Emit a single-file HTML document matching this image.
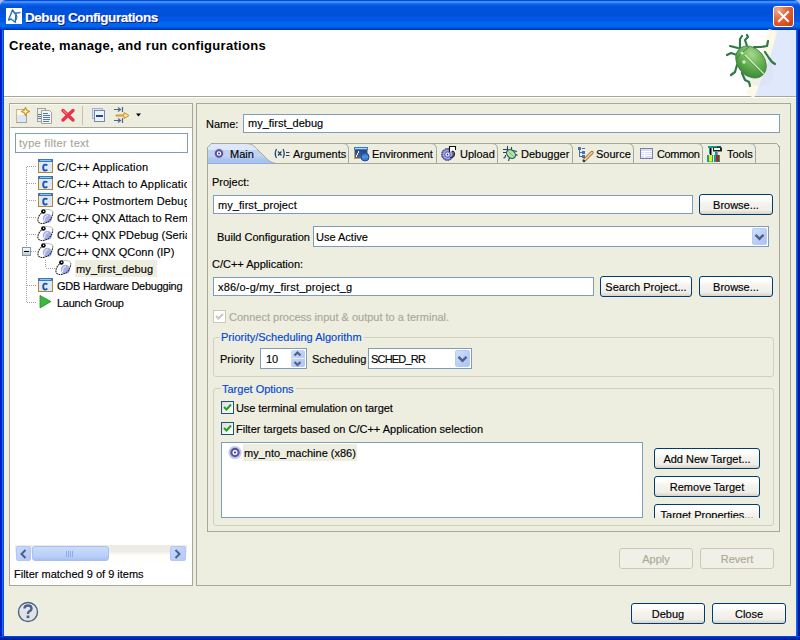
<!DOCTYPE html>
<html><head><meta charset="utf-8">
<style>
*{margin:0;padding:0;box-sizing:border-box}
html,body{width:800px;height:640px;overflow:hidden;background:#a9bde9}
body{position:relative;font-family:"Liberation Sans",sans-serif;font-size:11px;color:#000;-webkit-text-stroke:0.15px currentColor}
.a{position:absolute}
svg.a{overflow:visible}
.t{position:absolute;white-space:nowrap;line-height:13px}
#title{left:0;top:0;width:800px;height:30px;border-radius:6px 6px 0 0;
background:linear-gradient(to bottom,#0a4adb 0,#0a4adb 1px,#3d8ef8 1px,#3d8ef8 3px,#1a6ef2 3px,#1a6ef2 4px,#0b5feb 4px,#0558e6 6px,#0052db 6px,#0052db 17px,#0058e4 17px,#0058e4 22px,#0066ed 22px,#0066ed 27px,#005de9 27px,#0048d4 28px,#0048d4 29px,#0036b8 29px)}
#lb{left:0;top:30px;width:4px;height:610px;background:linear-gradient(to right,#0018c0 0,#0a22c8 2px,#166ef0 2px,#166ef0 3px,#0050e0 3px)}
#rb{left:796px;top:30px;width:4px;height:610px;background:linear-gradient(to right,#0f66f8 0,#0f66f8 1px,#0048d8 1px,#0048d8 2px,#001a98 2px)}
#bb{left:0;top:636px;width:800px;height:4px;background:linear-gradient(to bottom,#0048e0 0,#0048e0 1px,#0030b8 1px,#001a98 4px)}
.panel{border:1px solid #a8a79a}
.tb{position:absolute;background:#fff;border:1px solid #7f9db9}
.btn{position:absolute;border:1px solid #003c74;border-radius:3px;background:linear-gradient(to bottom,#fff 0,#fefefd 20%,#f4f3ee 45%,#efeee8 80%,#d8d2c6 100%);text-align:center;line-height:19px;padding-top:1px;white-space:nowrap}
.btn.dis{border-color:#cac8bb;color:#aca899;background:#f0f0e6}
.grp{position:absolute;border:1px solid #d0d0bf;border-radius:3px}
.gt{position:absolute;color:#0046d5;background:#eeeee0;padding:0 2px 0 1px;white-space:nowrap;line-height:13px}
.cb{position:absolute;width:13px;height:13px;border:1px solid #1c5180;background:linear-gradient(135deg,#dcdcd7 0,#f6f6f3 70%,#fff 100%)}
</style></head><body>
<div id="title" class="a"></div>
<div id="lb" class="a"></div>
<div id="rb" class="a"></div>
<div id="bb" class="a"></div>
<div class="a" style="left:4px;top:30px;width:792px;height:66px;background:#fff"></div>
<div class="a" style="left:4px;top:96px;width:792px;height:1px;background:#a8a79a"></div>
<div class="a" style="left:4px;top:97px;width:792px;height:1px;background:#fff"></div>
<div class="a" style="left:4px;top:98px;width:792px;height:538px;background:#eeeee0"></div>

<!-- title text -->
<div class="t" style="left:26px;top:12px;font-weight:bold;font-size:13.5px;letter-spacing:-0.45px;color:#0a1e8a">Debug Configurations</div>
<div class="t" style="left:25px;top:11px;font-weight:bold;font-size:13.5px;letter-spacing:-0.45px;color:#fff">Debug Configurations</div>
<!-- title icon -->
<svg class="a" style="left:6px;top:8px" width="16" height="16" viewBox="0 0 16 16">
<rect width="16" height="16" fill="#fff"/>
<g fill="none" stroke-linecap="round" stroke-linejoin="round">
<path d="M6.5 2 L9 5.5 L10 5 L9.3 14.3 L5 11 L2.5 12 L6.5 2" stroke="#2f6aa8" stroke-width="1.4"/>
<path d="M8.5 5.5 L14 4.5" stroke="#3c80c0" stroke-width="1.3"/>
<path d="M10.5 7 Q12 9 10 12" stroke="#2a5a98" stroke-width="1"/>
<path d="M5 8 L4 10.5 M6 11 L8 12" stroke="#8ad4f4" stroke-width="1"/>
</g>
</svg>
<!-- close btn -->
<div class="a" style="left:773px;top:6px;width:21px;height:21px;border:1px solid #fff;border-radius:3px;background:radial-gradient(circle at 20% 15%,#f4a88c 0,#e66a40 40%,#d84a1c 75%,#c03a10 100%)"></div>
<svg class="a" style="left:773px;top:6px" width="21" height="21"><path d="M6 6 L15 15 M15 6 L6 15" stroke="#fff" stroke-width="2" stroke-linecap="square"/></svg>

<!-- header text -->
<div class="t" style="left:9px;top:39px;font-weight:bold;font-size:13px;letter-spacing:0.3px;-webkit-text-stroke:0">Create, manage, and run configurations</div>
<!-- header art (bug) -->
<svg class="a" style="left:700px;top:30px" width="96" height="66" viewBox="0 0 96 66">
<defs>
<radialGradient id="bugb" cx="0.35" cy="0.3" r="0.75"><stop offset="0" stop-color="#a8d890"/><stop offset="0.45" stop-color="#6cb456"/><stop offset="1" stop-color="#3a8a36"/></radialGradient>
<radialGradient id="glow" cx="0.5" cy="0.5" r="0.5"><stop offset="0" stop-color="#fffbe8" stop-opacity="1"/><stop offset="1" stop-color="#fffbe8" stop-opacity="0"/></radialGradient>
</defs>
<path d="M75 0 H96 V66 H55 C62 45 69 25 75 0 Z" fill="#e0e8fc"/>
<path d="M73 0 C67 25 59 45 50 66" fill="none" stroke="#fdf8e6" stroke-width="9" opacity="0.9"/>
<ellipse cx="56" cy="38" rx="20" ry="16" transform="rotate(50 56 38)" fill="#d8dcec" opacity="0.35"/>
<g stroke="#2e7a46" stroke-width="2.2" fill="none" stroke-linecap="round" stroke-linejoin="round">
<path d="M40 18 L40 9 L42 6"/>
<path d="M38 18 L30 16"/>
<path d="M47 16 L45 10 L48 7 L47 5"/>
<path d="M54 17 L61 17 L67 16 L68 11"/>
<path d="M65 22 L69 28 L72 32 L75 34"/>
<path d="M37 25 L31 23 L27 25"/>
<path d="M37 35 L35 42 L31 45"/>
<path d="M42 43 L45 50 L49 52 L50 56"/>
</g>
<ellipse cx="51" cy="32" rx="17.5" ry="13.5" transform="rotate(50 51 32)" fill="url(#bugb)" stroke="#3a8040" stroke-width="0.8"/>
<path d="M49 17 C44 20 40 25 36 29" fill="none" stroke="#3e8a3a" stroke-width="1"/>
<path d="M45 25 L64 44" stroke="#d8f0c8" stroke-width="1.2"/>
<path d="M45 25 L64 44" stroke="#3a7a30" stroke-width="0.6" transform="translate(-0.8 0.8)"/>
<circle cx="42" cy="23" r="1.6" fill="#e8f8e0" opacity="0.8"/>
<circle cx="44" cy="32" r="1.8" fill="#e8f8e0" opacity="0.8"/>
</svg>

<!-- ===== left panel ===== -->
<div class="a panel" style="left:9px;top:103px;width:184px;height:483px;background:#fff"></div>
<div class="a" style="left:10px;top:104px;width:182px;height:24px;background:#eeeee0;border-bottom:1px solid #a8a79a;border-left:1px solid #f8f8f0;border-top:1px solid #f8f8f0"></div>
<svg class="a" style="left:0;top:0" width="200" height="130">
<!-- new -->
<rect x="16.5" y="109.5" width="10" height="13" fill="#dde6fa" stroke="#a4a494"/>
<rect x="17" y="110" width="9" height="5" fill="#fff8e4"/>
<path d="M16.5 122.5 V109.5 H22" fill="none" stroke="#c8b888"/>
<path d="M25.5 107.5 L26.8 110.2 L29.5 111.5 L26.8 112.8 L25.5 115.5 L24.2 112.8 L21.5 111.5 L24.2 110.2 Z" fill="#fff4c0" stroke="#c89020" stroke-width="1.1" stroke-linejoin="round"/>
<!-- duplicate -->
<rect x="37.5" y="108.5" width="8" height="13" fill="#eee" stroke="#a4a494"/>
<path d="M41.5 110.5 H49.5 L51.5 112.5 V123.5 H41.5 Z" fill="#f6f6f6" stroke="#a4a494"/>
<g stroke="#5078b8"><line x1="43" y1="113.5" x2="48" y2="113.5"/><line x1="43" y1="115.5" x2="50" y2="115.5"/><line x1="43" y1="117.5" x2="50" y2="117.5"/><line x1="43" y1="119.5" x2="50" y2="119.5"/><line x1="43" y1="121.5" x2="49" y2="121.5"/><line x1="38" y1="114.5" x2="41" y2="114.5"/><line x1="38" y1="116.5" x2="41" y2="116.5"/><line x1="38" y1="118.5" x2="41" y2="118.5"/></g>
<!-- delete -->
<path d="M63 110.5 L73 120 M73 110.5 L63 120" stroke="#e8344a" stroke-width="3.4" stroke-linecap="round"/>
<path d="M63 110.5 L67 114" stroke="#f8a0a8" stroke-width="1"/>
<!-- sep -->
<line x1="82.5" y1="106" x2="82.5" y2="125" stroke="#c8c0a8"/>
<!-- collapse -->
<rect x="92.5" y="108.5" width="10" height="10" fill="#d8e4f4" stroke="#a0b4d0"/>
<rect x="94.5" y="110.5" width="10" height="11" fill="#eef2fa" stroke="#7a86a8"/>
<line x1="96" y1="116" x2="103" y2="116" stroke="#1c4aa0" stroke-width="2"/>
<!-- filter -->
<g stroke="#4d6890" stroke-width="1.2" fill="none"><path d="M114 109.5 H120 M118 107.5 L120.5 109.5 L118 111.5 M122.5 107 V112"/><path d="M114 120.5 H120 M118 118.5 L120.5 120.5 L118 122.5 M122.5 118 V123"/></g>
<path d="M116 115 H124 V112.5 L129 115.5 L124 118.5 V116 H116 Z" fill="#f8e8a0" stroke="#c89020"/>
<path d="M136 113.5 H141 L138.5 116.5 Z" fill="#000"/>
</svg>
<div class="tb" style="left:15px;top:133px;width:173px;height:20px"></div>
<div class="t" style="left:19px;top:137px;color:#a8a79a;letter-spacing:0.3px">type filter text</div>

<!-- tree -->
<div class="a" style="left:15px;top:156px;width:172px;height:388px;overflow:hidden">
<svg class="a" style="left:-15px;top:-156px" width="200" height="320">
<g stroke="#a0a0a0" stroke-dasharray="1 1" shape-rendering="crispEdges">
<line x1="26.5" y1="167" x2="26.5" y2="302"/>
<line x1="27" y1="166.5" x2="37" y2="166.5"/>
<line x1="27" y1="183.5" x2="37" y2="183.5"/>
<line x1="27" y1="200.5" x2="37" y2="200.5"/>
<line x1="27" y1="217.5" x2="37" y2="217.5"/>
<line x1="27" y1="234.5" x2="37" y2="234.5"/>
<line x1="31" y1="251.5" x2="37" y2="251.5"/>
<line x1="27" y1="285.5" x2="37" y2="285.5"/>
<line x1="27" y1="302.5" x2="37" y2="302.5"/>
<line x1="45.5" y1="260" x2="45.5" y2="268"/>
<line x1="46" y1="268.5" x2="55" y2="268.5"/>
</g>
<defs><linearGradient id="mbg" x1="0" y1="0" x2="0" y2="1"><stop offset="0" stop-color="#fff"/><stop offset="1" stop-color="#c8c4b4"/></linearGradient></defs><rect x="22.5" y="247.5" width="8" height="8" fill="url(#mbg)" stroke="#7a98af"/>
<line x1="24" y1="251.5" x2="29" y2="251.5" stroke="#000"/>
<g id="cic">
<rect x="38.5" y="159.5" width="14" height="13" fill="#dfe7fc" stroke="#b08a30"/>
<rect x="38" y="159" width="15" height="3" fill="#3a78b8"/>
<line x1="40" y1="160.5" x2="51" y2="160.5" stroke="#8ac8f0"/>
<path d="M47.2 165.6 Q46.6 164.6 45.2 164.6 Q43.2 164.6 43.2 167.6 Q43.2 170.6 45.2 170.6 Q46.6 170.6 47.2 169.6" fill="none" stroke="#1e56a0" stroke-width="1.9"/>
</g>
<use href="#cic" y="17"/>
<use href="#cic" y="34"/>
<use href="#cic" y="119"/>
<g id="qic">
<path d="M44 209.8 C48 209.2 52.5 209.5 52.8 212.5" fill="none" stroke="#b8c8cc" stroke-width="1.1"/>
<circle cx="47.4" cy="218.4" r="4.6" fill="#a6aee8"/>
<path d="M44.6 221 Q44.2 216.5 47.8 215.3" stroke="#e8ecfc" stroke-width="1.1" fill="none"/>
<path d="M43.4 211.5 C39.5 214 37 218.5 38.2 221.5 C39.5 224.2 43.5 223.8 47 222.3 C50 220.8 52.5 217.5 52.8 212.5" fill="none" stroke="#2c2c30" stroke-width="1.1" stroke-dasharray="1.8 0.7"/>
<circle cx="43.4" cy="211.5" r="2.3" fill="#000"/>
<circle cx="43.6" cy="211.3" r="0.75" fill="#fff"/>
</g>
<use href="#qic" y="17"/>
<use href="#qic" y="34"/>
<use href="#qic" x="18" y="51"/>
<path d="M40 295.5 L51 301.5 L40 308 Z" fill="#3cb83c" stroke="#2a8a2a" stroke-width="0.8"/>
</svg>
<div class="a" style="left:60px;top:104px;width:82px;height:17px;background:#eeeee0"></div>
<div class="t" style="left:42px;top:5px;letter-spacing:0.19px">C/C++ Application</div>
<div class="t" style="left:42px;top:22px;letter-spacing:0.2px">C/C++ Attach to Application</div>
<div class="t" style="left:42px;top:39px;letter-spacing:0.15px">C/C++ Postmortem Debugger</div>
<div class="t" style="left:42px;top:56px">C/C++ QNX Attach to Remote</div>
<div class="t" style="left:42px;top:73px">C/C++ QNX PDebug (Serial)</div>
<div class="t" style="left:42px;top:90px">C/C++ QNX QConn (IP)</div>
<div class="t" style="left:61px;top:107px;letter-spacing:0.15px">my_first_debug</div>
<div class="t" style="left:42px;top:124px;letter-spacing:-0.25px">GDB Hardware Debugging</div>
<div class="t" style="left:42px;top:141px;letter-spacing:-0.25px">Launch Group</div>
</div>

<!-- scrollbar -->
<div class="a" style="left:15px;top:545px;width:172px;height:17px;background:linear-gradient(to bottom,#eeede5 0,#eeede5 40%,#fefefb 60%,#fefefb 100%)"></div>
<div class="a" style="left:16px;top:546px;width:15px;height:15px;border:1px solid #b4c8f6;border-radius:2px;background:linear-gradient(135deg,#c8daff,#b4c8f4)"></div>
<div class="a" style="left:32px;top:546px;width:77px;height:15px;border:1px solid #a8bef0;border-radius:3px;background:linear-gradient(to bottom,#cadcfc,#b8d0f8 70%,#a8c0f0)"></div>
<div class="a" style="left:170px;top:546px;width:16px;height:15px;border:1px solid #b4c8f6;border-radius:2px;background:linear-gradient(135deg,#c8daff,#b4c8f4)"></div>
<svg class="a" style="left:0;top:540px" width="200" height="24">
<path d="M25.5 10 L21.5 14 L25.5 18" fill="none" stroke="#4d6185" stroke-width="2"/>
<path d="M175.5 10 L179.5 14 L175.5 18" fill="none" stroke="#4d6185" stroke-width="2"/>
<g stroke="#8aacf0"><line x1="66.5" y1="11" x2="66.5" y2="17"/><line x1="68.5" y1="11" x2="68.5" y2="17"/><line x1="70.5" y1="11" x2="70.5" y2="17"/><line x1="72.5" y1="11" x2="72.5" y2="17"/></g>
</svg>
<div class="t" style="left:14px;top:568px">Filter matched 9 of 9 items</div>

<!-- ===== right panel ===== -->
<div class="a panel" style="left:196px;top:103px;width:595px;height:483px;border-left-color:#a8a79a"></div>
<div class="t" style="left:206px;top:118px">Name:</div>
<div class="tb" style="left:243px;top:114px;width:537px;height:19px"></div>
<div class="t" style="left:248px;top:117px">my_first_debug</div>

<!-- tab folder -->
<svg class="a" style="left:0;top:0" width="800" height="640" shape-rendering="crispEdges">
<defs><linearGradient id="selg" x1="0" y1="0" x2="0" y2="1">
<stop offset="0" stop-color="#dfe8fb"/><stop offset="0.3" stop-color="#dfe8fb"/><stop offset="0.32" stop-color="#bdd2f5"/><stop offset="0.6" stop-color="#c3d3f1"/><stop offset="0.75" stop-color="#aac6ef"/><stop offset="1" stop-color="#a6c2ee"/></linearGradient></defs>
<path d="M207.5 531.5 V147.5 L211.5 143.5 H774.5 Q779.5 143.5 779.5 149.5 V531.5 Z" fill="none" stroke="#a8a79a"/>
<path d="M208 164 V147.5 L211.5 144 H246 C252 144 254 146 258 150 L266 158 C270 162 273 163 277 163 V164 Z" fill="url(#selg)" shape-rendering="auto"/>
<path d="M208 163 H277 V164 H208 Z" fill="#8daee8"/>
<path d="M246 143.5 C252 143.5 254 146 258 150 L266 158 C270 162 273 163.5 277 163.5" fill="none" stroke="#a8a79a" shape-rendering="auto"/>
<line x1="277" y1="163.5" x2="779" y2="163.5" stroke="#a8a79a"/>
<g fill="none" stroke="#a8a79a" shape-rendering="auto">
<path d="M343 143.5 Q348.5 143.5 348.5 149.5 V163"/>
<path d="M431 143.5 Q436.5 143.5 436.5 149.5 V163"/>
<path d="M492 143.5 Q497.5 143.5 497.5 149.5 V163"/>
<path d="M567 143.5 Q572.5 143.5 572.5 149.5 V163"/>
<path d="M628 143.5 Q633.5 143.5 633.5 149.5 V163"/>
<path d="M697 143.5 Q702.5 143.5 702.5 149.5 V163"/>
<path d="M750 143.5 Q755.5 143.5 755.5 149.5 V163"/>
</g>
</svg>
<!-- tab icons -->
<svg class="a" style="left:0;top:0" width="800" height="170">
<!-- main -->
<circle cx="219" cy="153.5" r="5.4" fill="#b4bce8" opacity="0.6"/>
<circle cx="219" cy="153.5" r="3.2" fill="#fff" stroke="#5a4f9a" stroke-width="1.9"/>
<circle cx="219" cy="153.5" r="1" fill="#2a3a7a"/>
<!-- args -->
<g stroke="#1f3f6f" stroke-width="1.2" fill="none">
<path d="M276.5 149 Q274 153.5 276.5 158"/>
<path d="M283 149 Q285.5 153.5 283 158"/>
<path d="M278 151.5 L281.5 155.5 M281.5 151.5 L278 155.5"/>
<path d="M286 152.5 H289.5 M286 155.5 H289.5"/>
</g>
<!-- environment -->
<defs><linearGradient id="envg" x1="0" y1="0" x2="0" y2="1"><stop offset="0" stop-color="#143a88"/><stop offset="1" stop-color="#4a6aa8"/></linearGradient></defs>
<rect x="354.5" y="147.5" width="13" height="11" fill="url(#envg)" stroke="#c8a050"/>
<rect x="354" y="147" width="14" height="3" fill="#3a7ac8"/>
<line x1="355" y1="148.5" x2="367" y2="148.5" stroke="#a8d8f8"/>
<g fill="#fff"><rect x="358" y="151" width="1" height="2"/><rect x="357" y="153" width="1" height="2"/><rect x="356" y="155" width="1" height="2"/></g>
<circle cx="365" cy="157" r="4" fill="#3a7ed0" stroke="#1a4aa0" stroke-width="1"/>
<line x1="362" y1="157" x2="368" y2="157" stroke="#6aa8e8" stroke-width="1"/>
<!-- upload -->
<circle cx="447.5" cy="154.5" r="6" fill="#6e6ec4" stroke="#222" stroke-width="0.8" stroke-dasharray="1.5 1"/>
<circle cx="447.5" cy="154.5" r="4" fill="none" stroke="#b8c0f4" stroke-width="1"/>
<circle cx="447.5" cy="154.5" r="2" fill="#fff"/>
<circle cx="447.5" cy="154.5" r="0.9" fill="#23407a"/>
<path d="M449.5 152 V146.5 H455.5 V150" fill="#fff" stroke="#111" stroke-width="1.1"/>
<path d="M452 151 Q455.5 152 454 156 Q453 157.5 450 157.5" fill="none" stroke="#111" stroke-width="1.1"/>
<!-- debugger -->
<g stroke="#1a4a4a" stroke-width="1.1" fill="none">
<path d="M503 149.5 H508 M507.5 146 V150 M511.5 147 V150.5 M513 150.5 L517 151.5"/>
<path d="M503 152.5 H506 M505.5 155 L505 157.5 L503.5 158 M516 154.5 L517.5 155.5"/>
<path d="M509.5 157.5 L508.5 161"/>
</g>
<ellipse cx="511" cy="154" rx="5" ry="3.8" transform="rotate(45 511 154)" fill="#b8e4a0" stroke="#1f5f7f" stroke-width="1.2"/>
<line x1="508.5" y1="151.5" x2="513.5" y2="156.5" stroke="#68b048" stroke-width="0.8"/>
<!-- source -->
<g fill="#4a6fb0"><rect x="578" y="147" width="3" height="3"/><rect x="582" y="148" width="3" height="1"/><rect x="582" y="151" width="3" height="3"/><rect x="582" y="155" width="3" height="3"/><rect x="579" y="150" width="1" height="7"/><rect x="580" y="152" width="2" height="1"/><rect x="580" y="156" width="2" height="1"/></g>
<path d="M584 160.5 L592 152.5" stroke="#8a5a20" stroke-width="3.2" stroke-linecap="round"/>
<path d="M584 160.5 L592 152.5" stroke="#f4c888" stroke-width="1.8" stroke-linecap="round"/>
<rect x="583" y="160" width="2" height="2" fill="#1a3a7a"/>
<!-- common -->
<rect x="640.5" y="148.5" width="12" height="10" fill="#d8ddf4" stroke="#7a80b0"/>
<g stroke="#fff"><line x1="641" y1="151.5" x2="652" y2="151.5"/><line x1="641" y1="153.5" x2="652" y2="153.5"/><line x1="641" y1="155.5" x2="652" y2="155.5"/><line x1="644.5" y1="151" x2="644.5" y2="158"/></g>
<!-- tools -->
<rect x="708" y="146" width="9" height="2" fill="#10a090"/>
<rect x="717" y="146" width="4" height="2" fill="#106050"/>
<rect x="713" y="147.5" width="9" height="4" fill="#222"/>
<rect x="714" y="148" width="6" height="2" fill="#f4f4f4"/>
<rect x="710" y="148" width="1.5" height="7" fill="#000"/>
<rect x="709" y="148" width="1" height="6" fill="#10a090"/>
<rect x="715" y="151.5" width="2" height="4" fill="#10a090"/>
<rect x="717" y="151.5" width="1" height="4" fill="#a080c0"/>
<rect x="707" y="155" width="6" height="7" fill="#10a090"/>
<rect x="709" y="155" width="3" height="6.5" fill="#f0f000"/>
<rect x="714" y="155" width="6" height="7" fill="#10a090"/>
<rect x="716" y="155" width="3" height="6.5" fill="#c02010"/>
</svg>
<div class="t" style="left:230px;top:148px">Main</div>
<div class="t" style="left:293px;top:148px">Arguments</div>
<div class="t" style="left:372px;top:148px;letter-spacing:-0.1px">Environment</div>
<div class="t" style="left:460px;top:148px">Upload</div>
<div class="t" style="left:521px;top:148px">Debugger</div>
<div class="t" style="left:596px;top:148px">Source</div>
<div class="t" style="left:657px;top:148px;letter-spacing:-0.35px">Common</div>
<div class="t" style="left:727px;top:148px">Tools</div>

<div class="t" style="left:212px;top:176px">Project:</div>
<div class="tb" style="left:213px;top:195px;width:480px;height:19px"></div>
<div class="t" style="left:218px;top:199px;letter-spacing:0.07px">my_first_project</div>
<div class="btn" style="left:699px;top:194px;width:74px;height:21px">Browse...</div>

<div class="t" style="left:217px;top:231px">Build Configuration</div>
<div class="tb" style="left:313px;top:226px;width:456px;height:21px"></div>
<div class="t" style="left:316px;top:231px">Use Active</div>
<div class="a" style="left:752px;top:228px;width:15px;height:17px;border-radius:2px;border:1px solid #b8cbf4;background:linear-gradient(135deg,#d0e0fc 0,#b8ccf6 60%,#acc4f4 100%)"></div>
<svg class="a" style="left:745px;top:222px" width="30" height="28"><path d="M10.5 12.8 L14.5 16.8 L18.5 12.8" fill="none" stroke="#4d6185" stroke-width="2.4"/></svg>

<div class="t" style="left:212px;top:258px">C/C++ Application:</div>
<div class="tb" style="left:213px;top:277px;width:381px;height:19px"></div>
<div class="t" style="left:218px;top:281px;letter-spacing:0.18px">x86/o-g/my_first_project_g</div>
<div class="btn" style="left:600px;top:276px;width:92px;height:21px">Search Project...</div>
<div class="btn" style="left:699px;top:276px;width:74px;height:21px">Browse...</div>

<div class="a" style="left:213px;top:310px;width:13px;height:13px;border:1px solid #cac8bb;background:#fff"></div>
<svg class="a" style="left:213px;top:310px" width="13" height="13"><path d="M3 6 L5.5 8.5 L10 4" fill="none" stroke="#c8c8b8" stroke-width="2"/></svg>
<div class="t" style="left:229px;top:311px;color:#a8a79a">Connect process input &amp; output to a terminal.</div>

<div class="grp" style="left:213px;top:337px;width:561px;height:40px"></div>
<div class="gt" style="left:220px;top:331px">Priority/Scheduling Algorithm</div>
<div class="t" style="left:220px;top:353px">Priority</div>
<div class="tb" style="left:260px;top:348px;width:47px;height:21px"></div>
<div class="t" style="left:266px;top:353px">10</div>
<div class="a" style="left:291px;top:350px;width:14px;height:17px;border-radius:2px;background:linear-gradient(135deg,#d0e0fc 0,#b8ccf6 60%,#aec4f4 100%)"></div><div class="a" style="left:290px;top:358px;width:16px;height:1px;background:#eeeedc"></div>

<svg class="a" style="left:284px;top:344px" width="28" height="28"><path d="M10.5 11.5 L13.5 8.5 L16.5 11.5 M10.5 18 L13.5 21 L16.5 18" fill="none" stroke="#4d6185" stroke-width="2.2"/></svg>
<div class="t" style="left:312px;top:353px">Scheduling</div>
<div class="tb" style="left:368px;top:348px;width:104px;height:21px"></div>
<div class="t" style="left:371px;top:353px;letter-spacing:-0.8px">SCHED_RR</div>
<div class="a" style="left:455px;top:350px;width:15px;height:17px;border-radius:2px;border:1px solid #b8cbf4;background:linear-gradient(135deg,#d0e0fc 0,#b8ccf6 60%,#acc4f4 100%)"></div>
<svg class="a" style="left:448px;top:344px" width="30" height="28"><path d="M10.5 12.8 L14.5 16.8 L18.5 12.8" fill="none" stroke="#4d6185" stroke-width="2.4"/></svg>

<div class="grp" style="left:213px;top:388px;width:561px;height:138px"></div>
<div class="gt" style="left:221px;top:383px">Target Options</div>
<div class="cb" style="left:221px;top:401px"></div>
<svg class="a" style="left:221px;top:401px" width="13" height="13"><path d="M3 6 L5.5 8.5 L10 3.5" fill="none" stroke="#21a121" stroke-width="2"/></svg>
<div class="t" style="left:236px;top:402px;letter-spacing:-0.07px">Use terminal emulation on target</div>
<div class="cb" style="left:221px;top:422px"></div>
<svg class="a" style="left:221px;top:422px" width="13" height="13"><path d="M3 6 L5.5 8.5 L10 3.5" fill="none" stroke="#21a121" stroke-width="2"/></svg>
<div class="t" style="left:236px;top:423px">Filter targets based on C/C++ Application selection</div>

<div class="tb" style="left:221px;top:442px;width:422px;height:76px"></div>
<div class="a" style="left:243px;top:444px;width:114px;height:17px;background:#eeeee0"></div>
<svg class="a" style="left:226px;top:444px" width="18" height="17">
<circle cx="9" cy="8.5" r="6.6" fill="#c4c8ee"/>
<circle cx="9" cy="8.5" r="3.6" fill="#fff" stroke="#5a54a0" stroke-width="2.2"/>
<circle cx="9" cy="8.5" r="1.1" fill="#2a3a7a"/>
</svg>
<div class="t" style="left:244px;top:447px">my_nto_machine (x86)</div>

<div class="btn" style="left:654px;top:448px;width:106px;height:21px">Add New Target...</div>
<div class="btn" style="left:654px;top:476px;width:106px;height:21px">Remove Target</div>
<div class="a" style="left:654px;top:504px;width:106px;height:14px;overflow:hidden"><div class="btn" style="left:0;top:0;width:106px;height:21px">Target Properties...</div></div>


<!-- help -->
<svg class="a" style="left:12px;top:596px" width="32" height="32">
<defs><linearGradient id="hg" x1="0" y1="0" x2="0" y2="1"><stop offset="0" stop-color="#f4f6fa"/><stop offset="0.45" stop-color="#dde3ee"/><stop offset="0.55" stop-color="#e4e2dc"/><stop offset="1" stop-color="#dde6f4"/></linearGradient></defs>
<circle cx="16" cy="16" r="9.5" fill="url(#hg)" stroke="#4d6185" stroke-width="1.4"/>
<path d="M12.5 12.5 Q12.5 9.5 16 9.5 Q19.5 9.5 19.5 12.5 Q19.5 14.5 17 15.5 Q16 16.2 16 18" fill="none" stroke="#4d6185" stroke-width="2.4"/>
<rect x="14.6" y="19.5" width="2.8" height="2.6" fill="#4d6185"/>
</svg>

<!-- footer buttons -->
<div class="btn dis" style="left:619px;top:548px;width:74px;height:21px">Apply</div>
<div class="btn dis" style="left:700px;top:548px;width:74px;height:21px">Revert</div>
<div class="btn" style="left:631px;top:603px;width:74px;height:21px">Debug</div>
<div class="btn" style="left:712px;top:603px;width:74px;height:21px">Close</div>
</body></html>
